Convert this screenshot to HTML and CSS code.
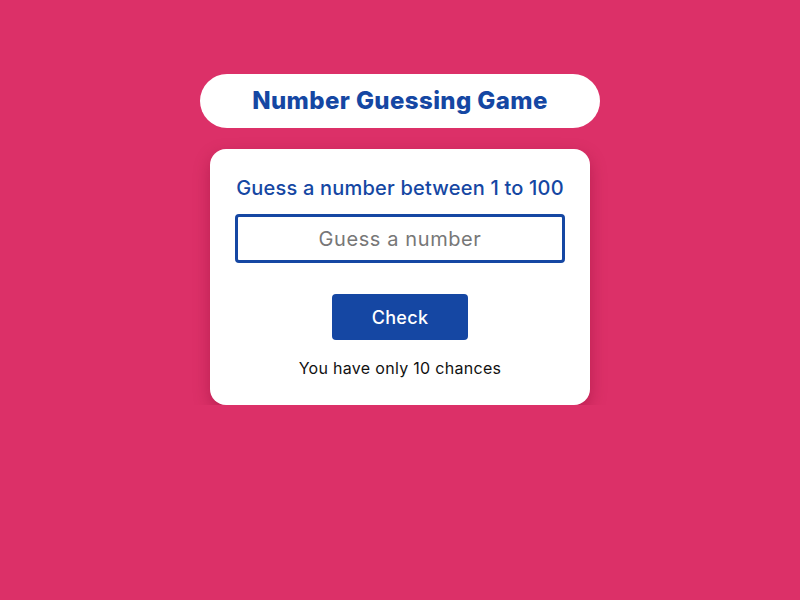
FILE: index.html
```html
<!DOCTYPE html>
<html lang="en">
<head>
  <meta charset="UTF-8">
  <title>Number Guessing Game</title>
  <link rel="stylesheet" href="styles.css">
</head>
<body>
  <div class="game">
    <h1 class="game-title">Number Guessing Game</h1>
    <div class="game-card">
      <p class="game-prompt">Guess a number between 1 to 100</p>
      <input type="text" class="guess-input" placeholder="Guess a number">
      <button class="check-btn">Check</button>
      <p class="chances">You have only 10 chances</p>
    </div>
  </div>
</body>
</html>
```

FILE: styles.css
```css
body {
  margin: 0;
  background: #dc3068;
  font-family: Inter, 'Noto Sans', sans-serif;
}
.game {
  display: flex;
  flex-direction: column;
  align-items: center;
  padding-top: 74px;
}
.game-title {
  width: 400px;
  height: 54px;
  margin: 0 0 21px;
  background: white;
  border-radius: 27px;
  color: #1547a3;
  font-size: 24px;
  font-weight: 800;
  letter-spacing: 0.4px;
  line-height: 54px;
  text-align: center;
}
.game-card {
  width: 330px;
  padding: 25px 25px 26px;
  background: white;
  border-radius: 16px;
  box-shadow: 0 6px 16px rgba(120, 0, 40, 0.35);
  display: flex;
  flex-direction: column;
  align-items: center;
}
.game-prompt {
  margin: 0 0 12px;
  color: #1547a3;
  font-size: 20px;
  font-weight: 500;
  letter-spacing: 0.2px;
  line-height: 28px;
  white-space: nowrap;
}
.guess-input {
  box-sizing: border-box;
  width: 330px;
  height: 49px;
  border: 3px solid #1547a3;
  border-radius: 4px;
  font-family: inherit;
  font-size: 20px;
  letter-spacing: 0.6px;
  text-align: center;
  outline: none;
}
.guess-input::placeholder {
  color: #777;
}
.check-btn {
  width: 136px;
  height: 46px;
  margin-top: 31px;
  border: none;
  border-radius: 4px;
  background: #1547a3;
  color: white;
  font-family: inherit;
  font-size: 18px;
  font-weight: 500;
  letter-spacing: 0.3px;
}
.chances {
  margin: 17px 0 0;
  font-size: 16px;
  letter-spacing: 0.3px;
  line-height: 22px;
  color: #111;
}
```
